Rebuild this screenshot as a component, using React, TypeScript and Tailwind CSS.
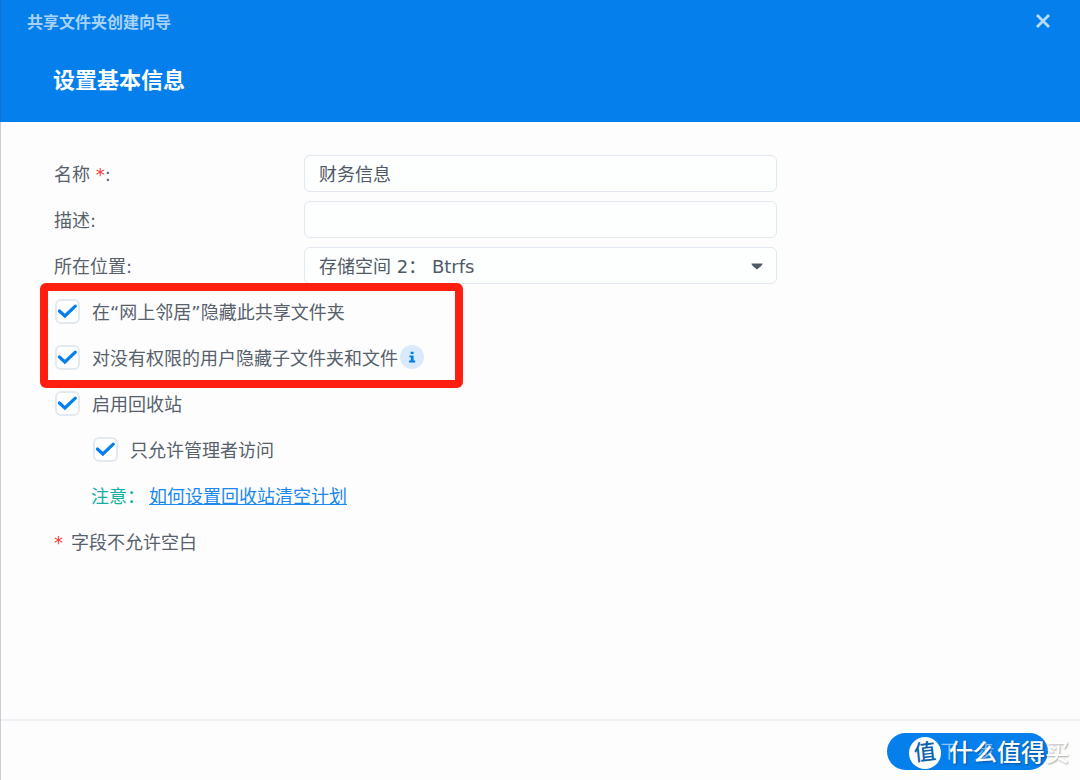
import { useState } from 'react'
import type { ReactNode } from 'react'

const fieldClass =
  'h-[37px] w-full rounded-md border border-[#e1e8ef] bg-[#fdfefe] px-3.5 text-lg text-[#4f5a66] outline-none focus:border-[#057feb]'

function Field({ id, label, required, children }: { id: string; label: string; required?: boolean; children: ReactNode }) {
  return (
    <div className="flex h-[46px] items-center">
      <label htmlFor={id} className="w-[250px] shrink-0 pt-1">
        {label}
        {required && <span className="text-[#ee3b3b]"> *</span>}:
      </label>
      <div className="relative max-w-[473px] flex-1">{children}</div>
    </div>
  )
}

function Check({ id, label, children }: { id: string; label: string; children?: ReactNode }) {
  const [checked, setChecked] = useState(true)

  return (
    <div className="flex h-[46px] items-center">
      <label htmlFor={id} className="flex items-center gap-3">
        <span className="grid shrink-0 place-items-center">
          <input
            id={id}
            type="checkbox"
            checked={checked}
            onChange={(e) => setChecked(e.target.checked)}
            className="col-start-1 row-start-1 size-[25px] appearance-none rounded-md border-2 border-[#e3e9f1] bg-white"
          />
          {checked && (
            <svg viewBox="0 0 25 25" className="pointer-events-none col-start-1 row-start-1 size-[25px]" fill="none" aria-hidden="true">
              <path d="M4.4 12 L9.9 17 L20.3 7.2" stroke="#057feb" strokeWidth="3.2" strokeLinecap="round" strokeLinejoin="miter" />
            </svg>
          )}
        </span>
        <span className="pt-1">{label}</span>
      </label>
      {children}
    </div>
  )
}

export default function App() {
  const [name, setName] = useState('财务信息')
  const [desc, setDesc] = useState('')

  return (
    <div
      lang="zh-CN"
      className="flex min-h-screen flex-col border-l border-[#c9ced6] bg-[#fdfdfd] font-['DejaVu_Sans','Noto_Sans_CJK_SC',sans-serif] text-lg text-[#57616c]"
    >
      {/* Header */}
      <header className="-ml-px h-[122px] border-l border-[#1a70c6] bg-[#057feb]">
        <div className="flex h-[46px] items-center justify-between pr-7 pl-[26px]">
          <span className="text-base font-bold text-[#a9d2f8]">共享文件夹创建向导</span>
          <button type="button" aria-label="关闭" className="mb-1 flex size-[18px] items-center justify-center">
            <svg viewBox="0 0 18 18" className="size-[18px]" aria-hidden="true">
              <path d="M3 3 L15 15 M15 3 L3 15" stroke="#b9dcfb" strokeWidth="2.8" />
            </svg>
          </button>
        </div>
        <h1 className="px-[52px] pt-[19px] text-[22px] leading-8 font-bold text-white">设置基本信息</h1>
      </header>

      {/* Form */}
      <main className="flex-1 px-[53px] pt-7">
        <Field id="name" label="名称" required>
          <input id="name" type="text" value={name} onChange={(e) => setName(e.target.value)} className={fieldClass} />
        </Field>
        <Field id="desc" label="描述">
          <input id="desc" type="text" value={desc} onChange={(e) => setDesc(e.target.value)} className={fieldClass} />
        </Field>
        <Field id="location" label="所在位置">
          <select id="location" className={`${fieldClass} appearance-none pt-1`}>
            <option>存储空间 2： Btrfs</option>
          </select>
          <svg viewBox="0 0 12 7" className="pointer-events-none absolute top-4 right-3.5 h-[7px] w-3" aria-hidden="true">
            <path d="M0.4 0.5 H11.6 Q11.4 2 10.2 2.9 L6 6.4 L1.8 2.9 Q0.6 2 0.4 0.5 Z" fill="#4f5a66" />
          </svg>
        </Field>

        <div className="relative pl-px">
          <Check id="hide-share" label="在“网上邻居”隐藏此共享文件夹" />
          <Check id="hide-sub" label="对没有权限的用户隐藏子文件夹和文件">
            <button type="button" aria-label="说明" className="ml-0.5 size-6 shrink-0 rounded-full bg-[#d9eafd]">
              <svg viewBox="0 0 24 24" className="size-6" fill="#057feb" aria-hidden="true">
                <path d="M10.6 6.8 H13.6 V9 H10.6 Z M9.4 10.4 H13.6 V15.6 H15.2 V17.4 H9 V15.6 H10.8 V12.2 H9.4 Z" />
              </svg>
            </button>
          </Check>
          {/* Highlight frame */}
          <div className="pointer-events-none absolute -top-[5px] -left-3.5 h-[105px] w-[423px] rounded-md border-8 border-[#ff1e10]" />
        </div>

        <div className="pl-px">
          <Check id="recycle" label="启用回收站" />
          <div className="pl-[38px]">
            <Check id="admin-only" label="只允许管理者访问" />
          </div>
        </div>
        <p className="flex h-[46px] items-center gap-1 pt-1 pl-[37px]">
          <span className="text-[#12b0a4]">注意：</span>
          <a href="#recycle-plan" className="text-[#1a88ee] underline">如何设置回收站清空计划</a>
        </p>
        <p className="flex h-[46px] items-center gap-2 pt-1">
          <span className="text-[#ee3b3b]">*</span>
          <span>字段不允许空白</span>
        </p>
      </main>

      {/* Footer */}
      <footer className="relative flex h-[61px] items-center justify-end border-t-2 border-[#edf1f5] pt-0.5 pr-8">
        <button type="button" className="h-[37px] w-[161px] rounded-full bg-[#057feb] text-lg text-[#8fc4f7]">下一步</button>
        <div className="pointer-events-none absolute top-4 right-[11px] flex items-center gap-2 text-2xl leading-8 font-medium text-white">
          <span className="flex size-8 items-center justify-center rounded-full bg-white">
            <span className="-rotate-6 text-[22px] font-medium text-[#0b62ae]">值</span>
          </span>
          <span className="[text-shadow:1px_1px_2px_rgb(0_0_0_/_0.35)]">什么值得买</span>
        </div>
      </footer>
    </div>
  )
}
